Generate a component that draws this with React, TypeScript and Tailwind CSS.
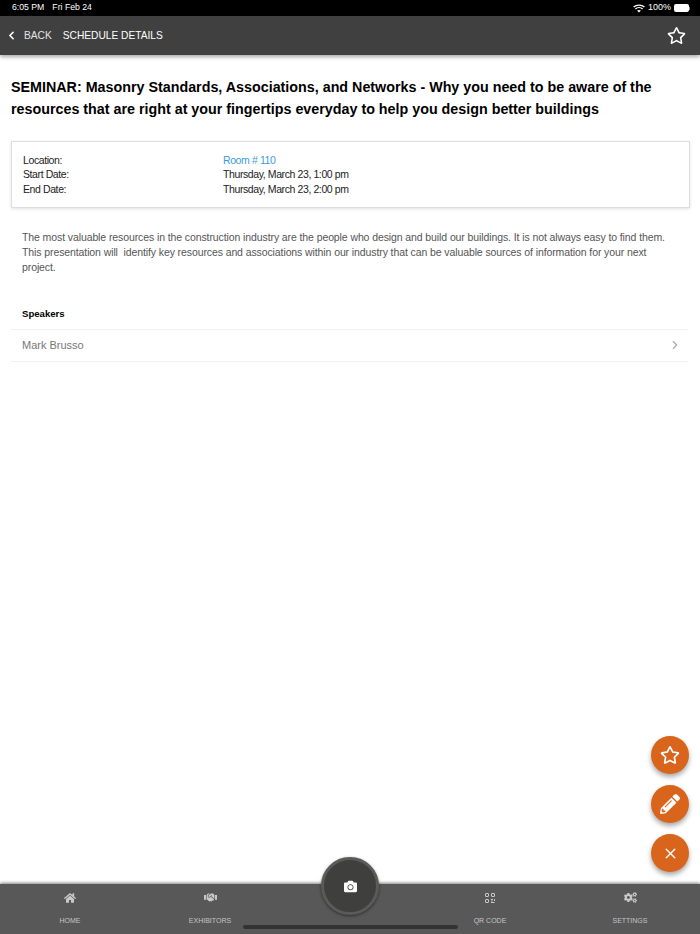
import { FaRegStar, FaPencilAlt, FaHome, FaHandshake, FaCamera, FaCogs } from "react-icons/fa";
import { FiChevronLeft, FiChevronRight, FiX } from "react-icons/fi";

function Wifi() {
  return (
    <svg width="12" height="9" viewBox="0 0 12 9" fill="none" stroke="#fff" strokeWidth="1.4">
      <path d="M0.6 3.1C3.6 0.4 8.4 0.4 11.4 3.1" />
      <path d="M2.4 5C4.4 3.2 7.6 3.2 9.6 5" />
      <path d="M6 8.6L4.1 6.6C5.2 5.7 6.8 5.7 7.9 6.6Z" fill="#fff" stroke="none" />
    </svg>
  );
}

function QrIcon() {
  return (
    <svg width="10" height="10" viewBox="0 0 10 10" fill="none" stroke="#c9c9c9" strokeWidth="1">
      <rect x="0.5" y="0.5" width="3" height="3" rx="0.5" />
      <rect x="6.5" y="0.5" width="3" height="3" rx="0.5" />
      <rect x="0.5" y="6.5" width="3" height="3" rx="0.5" />
      <path d="M6 6.5H8M9.5 6V8M6 9.5H9.5M6 8H7.5" />
    </svg>
  );
}

const details = [
  { label: "Location:", value: "Room # 110", link: true },
  { label: "Start Date:", value: "Thursday, March 23, 1:00 pm" },
  { label: "End Date:", value: "Thursday, March 23, 2:00 pm" },
];

const tabs = [
  { label: "HOME", icon: <FaHome size={12} color="#c9c9c9" /> },
  { label: "EXHIBITORS", icon: <FaHandshake size={13} color="#c9c9c9" /> },
  { label: "", icon: null },
  { label: "QR CODE", icon: <QrIcon /> },
  { label: "SETTINGS", icon: <FaCogs size={13} color="#c9c9c9" /> },
];

export default function App() {
  return (
    <div className="relative flex h-[934px] w-[700px] flex-col overflow-hidden bg-white font-['Liberation_Sans',sans-serif]">
      {/* Status bar */}
      <div className="flex h-4 items-center justify-between bg-black pl-3 pr-[10px] text-[8.7px] text-white">
        <div className="flex gap-2">
          <span>6:05 PM</span>
          <span>Fri Feb 24</span>
        </div>
        <div className="flex items-center gap-[3px]">
          <Wifi />
          <span className="text-[9px]">100%</span>
          <div className="flex items-center">
            <div className="h-[8px] w-[15px] rounded-[2px] bg-white" />
            <div className="h-[3px] w-[1px] bg-[#999]" />
          </div>
        </div>
      </div>

      {/* Header */}
      <div className="z-10 flex h-[39px] items-center justify-between bg-[#404040] pl-[5px] pr-[14px] shadow-[0_2px_4px_rgba(0,0,0,0.35)]">
        <div className="flex items-center text-[10.2px] text-white">
          <FiChevronLeft size={13} strokeWidth={3} />
          <span className="ml-[6px] text-[#e4e4e4]">BACK</span>
          <span className="ml-[11px]">SCHEDULE DETAILS</span>
        </div>
        <FaRegStar size={19} color="#fff" />
      </div>

      {/* Content */}
      <div className="flex-1 px-[11px]">
        <h1 className="mt-[22px] text-[14.3px] font-bold leading-[21.5px] text-black">
          SEMINAR: Masonry Standards, Associations, and Networks - Why you need to be aware of the resources that are right at your fingertips everyday to help you design better buildings
        </h1>

        <div className="mt-[21px] w-[679px] border border-[#dedede] p-[11px] text-[10.5px] leading-[14.3px] tracking-[-0.4px] text-[#222] shadow-[0_1px_3px_rgba(0,0,0,0.12)]">
          {details.map((row) => (
            <div key={row.label} className="flex">
              <div className="w-[200px]">{row.label}</div>
              <div className={row.link ? "text-[#3b9ae1]" : ""}>{row.value}</div>
            </div>
          ))}
        </div>

        <p className="mt-[22px] px-[11px] text-[10.5px] leading-[15px] tracking-[-0.1px] text-[#555]">
          The most valuable resources in the construction industry are the people who design and build our buildings. It is not always easy to find them. This presentation will&nbsp; identify key resources and associations within our industry that can be valuable sources of information for your next project.
        </p>

        <div className="mt-[32px] px-[11px] pb-[8px] text-[9.6px] font-bold leading-[14px] text-black">Speakers</div>
        <div className="flex h-[33px] w-[677px] items-center justify-between border-y border-[#f0f0f0] px-[11px] text-[11px] text-[#777]">
          <span>Mark Brusso</span>
          <FiChevronRight size={14} color="#aaa" strokeWidth={2} className="mr-[-5px]" />
        </div>
      </div>

      {/* Floating buttons */}
      <div className="absolute right-[11px] top-[736px] flex flex-col gap-[11px]">
        <div className="flex h-[38px] w-[38px] items-center justify-center rounded-full bg-[#d9641c] shadow-[0_3px_5px_rgba(0,0,0,0.35)]">
          <FaRegStar size={20} color="#fff" />
        </div>
        <div className="flex h-[38px] w-[38px] items-center justify-center rounded-full bg-[#d9641c] shadow-[0_3px_5px_rgba(0,0,0,0.35)]">
          <FaPencilAlt size={20} color="#fff" />
        </div>
        <div className="flex h-[38px] w-[38px] items-center justify-center rounded-full bg-[#d9641c] shadow-[0_3px_5px_rgba(0,0,0,0.35)]">
          <FiX size={17} color="#fff" strokeWidth={2} />
        </div>
      </div>

      {/* Tab bar */}
      <div className="grid h-[50px] grid-cols-5 bg-[#585858] shadow-[0_-1px_3px_rgba(0,0,0,0.5)]">
        {tabs.map((tab, i) => (
          <div key={i} className="flex flex-col items-center pt-[7px]">
            <div className="flex h-[13px] items-center">{tab.icon}</div>
            <div className="mt-[12px] text-[7px] leading-[10px] text-[#c4c4c4]">{tab.label}</div>
          </div>
        ))}
      </div>

      {/* Camera button */}
      <div className="absolute left-[321px] top-[857px] flex h-[58px] w-[58px] items-center justify-center rounded-full border-[3px] border-[#5a5a5a] bg-[#3f3f3d] shadow-[0_1px_3px_rgba(0,0,0,0.5)]">
        <FaCamera size={13} color="#fff" />
      </div>

      {/* Home indicator */}
      <div className="absolute left-[243px] top-[925px] h-[4px] w-[215px] rounded-full bg-[#333]" />
    </div>
  );
}
